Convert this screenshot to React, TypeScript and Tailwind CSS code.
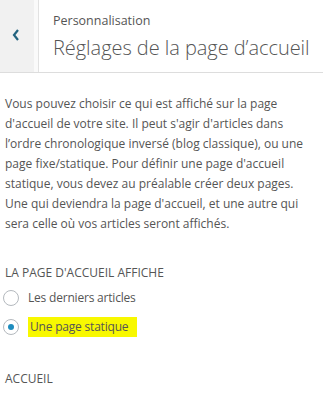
import React from "react";

export default function App() {
  const font = { fontFamily: '"Open Sans", "Noto Sans", sans-serif' };
  return (
    <div className="w-[323px] h-[393px] bg-white overflow-hidden text-[#555]" style={font}>
      <div className="flex h-[73px] border-b border-[#ddd] bg-white">
        <div className="w-[34px] bg-[#f1f1f1] flex items-center justify-center">
          <svg width="8" height="12" viewBox="0 0 8 12" className="ml-[-3px] mt-[-2px]">
            <path d="M6 1 L2 6 L6 11" fill="none" stroke="#22637f" strokeWidth="2.2" />
          </svg>
        </div>
        <div className="w-[5px] bg-[#fafafa] border-r border-[#e2e2e2]" />
        <div className="pl-[14px] pt-[12px] flex flex-col">
          <div className="text-[12.5px] leading-[18px] text-[#555]">Personnalisation</div>
          <div className="text-[20px] leading-[28px] font-light tracking-[-0.05px] text-[#555] mt-[4px] whitespace-nowrap">
            Réglages de la page d’accueil
          </div>
        </div>
      </div>
      <div className="px-[5px] pt-[21px]">
        <p className="text-[12px] leading-[20px] text-[#555] whitespace-nowrap">
          Vous pouvez choisir ce qui est affiché sur la page<br />
          d'accueil de votre site. Il peut s'agir d'articles dans<br />
          l’ordre chronologique inversé (blog classique), ou une<br />
          page fixe/statique. Pour définir une page d'accueil<br />
          statique, vous devez au préalable créer deux pages.<br />
          Une qui deviendra la page d'accueil, et une autre qui<br />
          sera celle où vos articles seront affichés.
        </p>
        <div className="mt-[30px] text-[12px] leading-[18px] uppercase text-[#555]">
          La page d'accueil affiche
        </div>
        <div className="mt-[6px] flex items-center h-[20px]">
          <span className="w-[16px] h-[16px] rounded-full border border-[#b4b9be] bg-white ml-[-2px] shrink-0" />
          <span className="ml-[9px] text-[12px] tracking-[-0.2px] text-[#555]">Les derniers articles</span>
        </div>
        <div className="mt-[8px] flex items-center h-[22px]">
          <span className="w-[16px] h-[16px] rounded-full border border-[#b4b9be] bg-white ml-[-2px] shrink-0 flex items-center justify-center">
            <span className="w-[6px] h-[6px] rounded-full bg-[#1e8cbe]" />
          </span>
          <span className="ml-[9px] text-[12px] tracking-[-0.2px] text-[#555] bg-[#f8f800] pl-[2px] pr-[9px] leading-[18px] py-[1px]">Une page statique</span>
        </div>
        <div className="mt-[32px] text-[12px] leading-[18px] uppercase text-[#555]">Accueil</div>
      </div>
    </div>
  );
}
